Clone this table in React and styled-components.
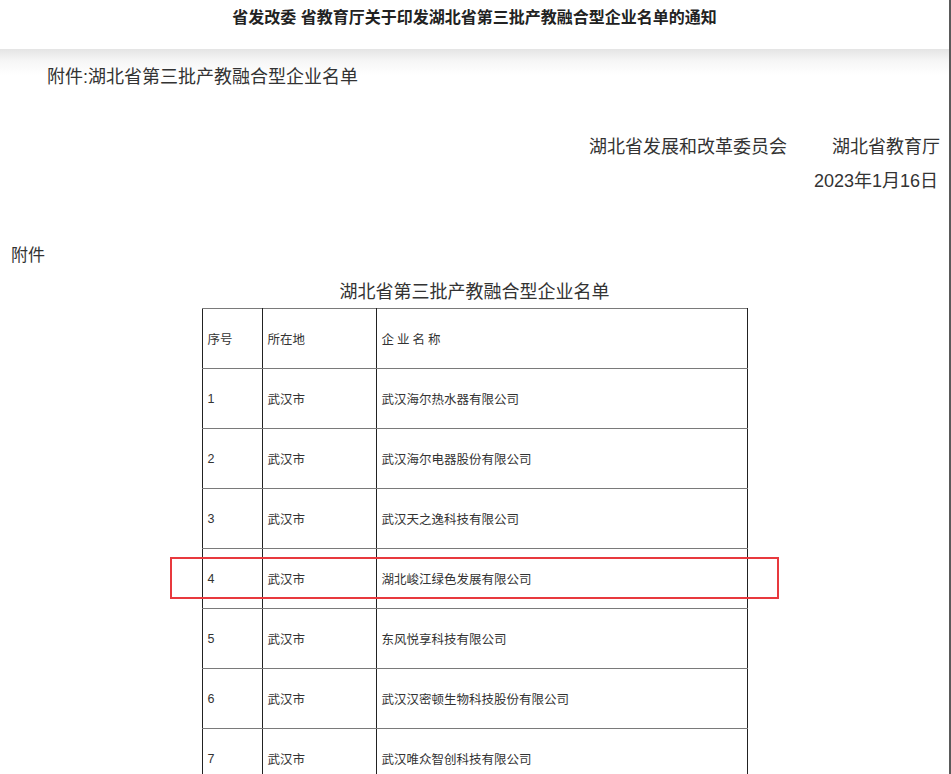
import React from "react";
import styled, { createGlobalStyle } from "styled-components";

const GlobalStyle = createGlobalStyle`
  html, body {
    margin: 0;
    padding: 0;
    background: #fff;
  }
  body {
    font-family: "Liberation Sans", "Noto Sans CJK SC", sans-serif;
    color: #333;
  }
`;

const Page = styled.div`
  width: 951px;
  height: 774px;
  box-sizing: border-box;
  overflow: hidden;
  border-right: 2px solid #5a5a5a;
  position: relative;
`;

const Header = styled.div`
  height: 49px;
  box-sizing: border-box;
  padding-top: 8px;
  text-align: center;
  font-size: 16px;
  line-height: 20px;
  font-weight: bold;
  color: #222;
`;

const Content = styled.div`
  background: linear-gradient(to bottom, #e4e4e4 0px, #f6f6f6 12px, #fff 26px);
  padding-top: 13px;
`;

const Line = styled.div`
  font-size: ${(p) => p.size || 17}px;
  line-height: ${(p) => p.lh || 30}px;
  margin-top: ${(p) => p.mt || 0}px;
  padding-left: ${(p) => p.pl || 0}px;
  padding-right: ${(p) => p.pr || 0}px;
  text-align: ${(p) => p.align || "left"};
  white-space: pre;
  color: #333;
`;

const TableWrap = styled.div`
  position: relative;
  width: 546px;
  margin: 1px auto 0;
`;

const Table = styled.table`
  width: 546px;
  border-collapse: collapse;
  table-layout: fixed;
  font-size: 12.5px;
  color: #333;
`;

const Cell = styled.td`
  height: 59px;
  padding: 0 0 0 5px;
  border-left: 1px solid #222;
  border-right: 1px solid #222;
  border-top: 1px solid #7a7a7a;
  border-bottom: 1px solid #7a7a7a;
  vertical-align: middle;
  letter-spacing: ${(p) => (p.spaced ? "3px" : "0")};
`;

const Highlight = styled.div`
  position: absolute;
  left: -32px;
  right: -31px;
  top: ${(p) => 60 * p.row + 9}px;
  height: 42px;
  box-sizing: border-box;
  border: 2px solid #e8393e;
  pointer-events: none;
`;

const rows = [
  ["1", "武汉市", "武汉海尔热水器有限公司"],
  ["2", "武汉市", "武汉海尔电器股份有限公司"],
  ["3", "武汉市", "武汉天之逸科技有限公司"],
  ["4", "武汉市", "湖北峻江绿色发展有限公司"],
  ["5", "武汉市", "东风悦享科技有限公司"],
  ["6", "武汉市", "武汉汉密顿生物科技股份有限公司"],
  ["7", "武汉市", "武汉唯众智创科技有限公司"],
];

export default function App() {
  return (
    <Page>
      <GlobalStyle />
      <Header>省发改委 省教育厅关于印发湖北省第三批产教融合型企业名单的通知</Header>
      <Content>
        <Line size={18} pl={47}>附件:湖北省第三批产教融合型企业名单</Line>
        <Line size={18} lh={34} mt={38} align="right" pr={9}>
          {"湖北省发展和改革委员会         湖北省教育厅"}
        </Line>
        <Line size={18} lh={34} align="right" pr={11}>
          2023年1月16日
        </Line>
        <Line size={17} mt={43} pl={11}>附件</Line>
        <Line size={18} mt={6} align="center">湖北省第三批产教融合型企业名单</Line>
        <TableWrap>
          <Table>
            <colgroup>
              <col style={{ width: 60 }} />
              <col style={{ width: 114 }} />
              <col />
            </colgroup>
            <tbody>
              <tr>
                <Cell>序号</Cell>
                <Cell>所在地</Cell>
                <Cell spaced>企业名称</Cell>
              </tr>
              {rows.map((r) => (
                <tr key={r[0]}>
                  <Cell>{r[0]}</Cell>
                  <Cell>{r[1]}</Cell>
                  <Cell>{r[2]}</Cell>
                </tr>
              ))}
            </tbody>
          </Table>
          <Highlight row={4} />
        </TableWrap>
      </Content>
    </Page>
  );
}
